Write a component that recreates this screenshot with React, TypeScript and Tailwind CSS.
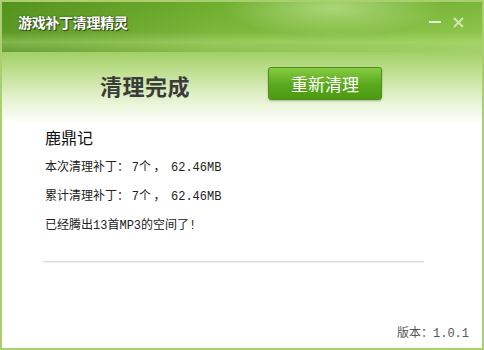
const cjk = "font-['SimSun','Noto_Sans_CJK_SC',sans-serif]"
const mono = "font-['Liberation_Mono','Noto_Sans_CJK_SC',monospace] text-[12px]"

function WindowControls() {
  return (
    <div className="flex items-center gap-[12px] pr-[18px]">
      <span className="block h-[2px] w-[12px] bg-white/80" />
      <svg width="11" height="11" viewBox="0 0 11 11" className="opacity-60">
        <path d="M1 1 L10 10 M10 1 L1 10" stroke="#ffffff" strokeWidth="2" />
      </svg>
    </div>
  )
}

function InfoLine({ children }: { children: React.ReactNode }) {
  return (
    <p className="h-[29px] whitespace-pre text-[12px] leading-[29px] text-[#222]">{children}</p>
  )
}

export default function App() {
  return (
    <div className={`${cjk} h-[350px] w-[484px] overflow-hidden bg-white`}>
      <div className="flex h-[350px] w-[484px] flex-col border-2 border-[#a9cf6e] bg-white">
        <div className="relative bg-[linear-gradient(180deg,#74b232_0px,#90c64e_38px,#b8dc86_65px,#e2f1cb_95px,#ffffff_122px)]">
          <div className="pointer-events-none absolute inset-x-0 top-0 h-[50px] bg-[radial-gradient(ellipse_110px_28px_at_330px_6px,rgba(205,238,165,0.6),transparent),linear-gradient(90deg,rgba(60,125,15,0.6),rgba(100,165,35,0.35)_45%,rgba(170,220,110,0.1))]" />
          <div className="pointer-events-none absolute inset-x-0 top-[30px] h-[20px] bg-[linear-gradient(180deg,rgba(255,255,255,0),rgba(190,230,140,0.35),rgba(255,255,255,0))]" />
          <div className="relative flex h-[40px] items-center justify-between pl-[16px]">
            <span className="text-[14px] font-bold tracking-[-0.3px] text-white [text-shadow:1px_1px_0_#2e4a12,0_0_2px_#2e4a12]">
              游戏补丁清理精灵
            </span>
            <WindowControls />
          </div>
          <div className="relative flex h-[80px] items-start pl-[98px]">
            <h1 className="mt-[31px] w-[168px] text-[22px] font-bold leading-[24px] tracking-[0.5px] text-[#3b3b3b]">清理完成</h1>
            <button className="mt-[25px] flex h-[33px] w-[114px] items-center justify-center rounded-[3px] border border-[#4d8f18] bg-[linear-gradient(180deg,#86cc42,#5aa81d_55%,#4c9a12)] text-[17px] text-white shadow-[0_1px_2px_rgba(0,0,0,0.25)]">
              重新清理
            </button>
          </div>
        </div>

        <div className="flex flex-1 flex-col pl-[43px] pr-[58px]">
          <p className="mt-[6px] text-[16px] leading-[18px] text-[#111]">鹿鼎记</p>
          <div className="mt-[5px]">
            <InfoLine>
              本次清理补丁： <span className={mono}>7</span>个 ，  <span className={mono}>62.46MB</span>
            </InfoLine>
            <InfoLine>
              累计清理补丁： <span className={mono}>7</span>个 ，  <span className={mono}>62.46MB</span>
            </InfoLine>
            <InfoLine>
              已经腾出<span className={mono}>13</span>首<span className={mono}>MP3</span>的空间了<span className={mono}>!</span>
            </InfoLine>
          </div>
          <div className="-ml-[2px] mt-[23px] h-[2px] w-[381px] border-t border-[#dcdcdc] bg-[#f1f1f1]" />
          <div className="mt-auto mb-[4px] -mr-[45px] text-right text-[12px] leading-[20px] text-[#555]">
            版本：<span className={mono}>1.0.1</span>
          </div>
        </div>
      </div>
    </div>
  )
}
